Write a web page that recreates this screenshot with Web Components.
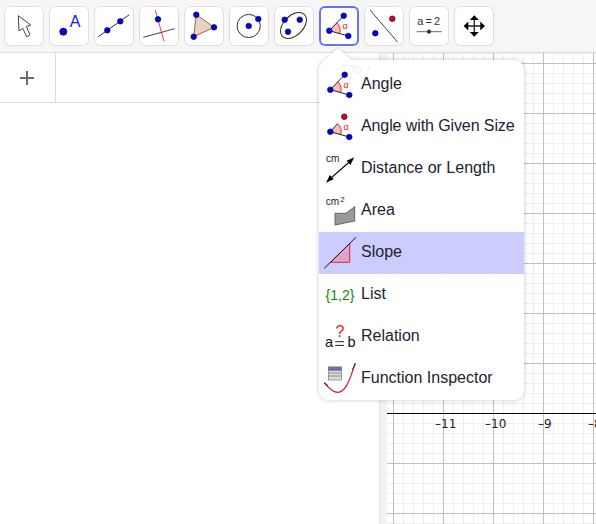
<!DOCTYPE html>
<html>
<head>
<meta charset="utf-8">
<title>Tools</title>
<style>
    html, body { margin: 0; height: 100%; background: #fff; overflow: hidden; }
    body { font-family: "Liberation Sans", Arial, sans-serif; }
</style>
</head>
<body>
<ggb-app>
    <ggb-toolbar slot="toolbar">
        <ggb-tool icon="move"></ggb-tool>
        <ggb-tool icon="point"></ggb-tool>
        <ggb-tool icon="line"></ggb-tool>
        <ggb-tool icon="perp"></ggb-tool>
        <ggb-tool icon="polygon"></ggb-tool>
        <ggb-tool icon="circle"></ggb-tool>
        <ggb-tool icon="conic"></ggb-tool>
        <ggb-tool icon="angle" selected></ggb-tool>
        <ggb-tool icon="reflect"></ggb-tool>
        <ggb-tool icon="slider"></ggb-tool>
        <ggb-tool icon="pan"></ggb-tool>
    </ggb-toolbar>
    <ggb-algebra slot="left"></ggb-algebra>
    <ggb-graphics slot="right"></ggb-graphics>
    <ggb-menu slot="popup">
        <ggb-menu-item icon="angle">Angle</ggb-menu-item>
        <ggb-menu-item icon="anglesize" style="letter-spacing: -.1px">Angle with Given Size</ggb-menu-item>
        <ggb-menu-item icon="distance">Distance or Length</ggb-menu-item>
        <ggb-menu-item icon="area">Area</ggb-menu-item>
        <ggb-menu-item icon="slope" active>Slope</ggb-menu-item>
        <ggb-menu-item icon="list">List</ggb-menu-item>
        <ggb-menu-item icon="relation">Relation</ggb-menu-item>
        <ggb-menu-item icon="inspector">Function Inspector</ggb-menu-item>
    </ggb-menu>
</ggb-app>

<script>
const pt = (x, y, fill = '#0000e0', r = 2.8) =>
    `<circle cx="${x}" cy="${y}" r="${r}" fill="${fill}" stroke="#101040" stroke-width=".7"/>`

const wedge = `<path d="M10.3 24.7L17.6 16.7A10.8 10.8 0 0 1 20.7 27.7Z" fill="#ffbcbc" stroke="none"/>
    <path d="M17.6 16.7A10.8 10.8 0 0 1 20.7 27.7" fill="none" stroke="#e83030" stroke-width="1"/>
    <text x="26" y="23.4" text-anchor="middle" font-size="9" fill="#e81818">α</text>`

const ICONS = {
    move: `<path d="M14.3 9.7L15 25L18.7 22.3L22.7 30.7L26 28.8L22.3 20.4L26.7 19Z" fill="#fff" stroke="#444" stroke-width="1" stroke-linejoin="round"/>`,
    point: `<circle cx="14.3" cy="25.7" r="3.6" fill="#0000e0" stroke="#111" stroke-width=".6"/>
        <text x="26" y="20.6" text-anchor="middle" font-size="16" fill="#1414ff">A</text>`,
    line: `<path d="M4.3 30.7L35.3 8.7" stroke="#333" stroke-width="1"/>${pt(13.3, 24.3)}${pt(26.3, 15.3)}`,
    perp: `<path d="M16.3 4L25 35.3" stroke="#f04040" stroke-width="1"/>
        <path d="M4.3 31.3L35.7 22.7" stroke="#444" stroke-width="1"/>${pt(19, 13.3)}`,
    polygon: `<path d="M12.3 8.7L30 21.3L9.7 30.7Z" fill="#e8d2c6" stroke="#a8623c" stroke-width="1"/>
        ${pt(12.3, 8.7)}${pt(30, 21.3)}${pt(9.7, 30.7)}`,
    circle: `<circle cx="19.7" cy="20" r="11.6" fill="none" stroke="#333" stroke-width="1"/>
        ${pt(19.7, 20)}${pt(29.3, 13)}`,
    conic: `<ellipse cx="19.5" cy="19.5" rx="15.5" ry="9.8" transform="rotate(-45 19.5 19.5)" fill="none" stroke="#333" stroke-width="1"/>
        ${pt(10.7, 13.7)}${pt(25.7, 13.7)}${pt(14, 25.7)}`,
    angle: `${wedge}<path d="M24.7 9.7L10.3 24.7L29.3 30" stroke="#222" stroke-width="1" fill="none"/>
        ${pt(24.7, 9.7)}${pt(10.3, 24.7)}${pt(29.3, 30)}`,
    anglesize: `${wedge}<path d="M17.6 16.7L10.3 24.7L29.3 30" stroke="#222" stroke-width="1" fill="none"/>
        ${pt(24.3, 9.7, '#e00010')}${pt(10.3, 24.7)}${pt(29.3, 30)}`,
    reflect: `<path d="M6 4L33.7 36.3" stroke="#444" stroke-width="1"/>${pt(11.3, 27.3)}${pt(28.3, 12.7, '#e00010')}`,
    slider: `<text x="19.7" y="19" text-anchor="middle" font-size="11" word-spacing="-1" fill="#333">a = 2</text>
        <path d="M7.7 25.7H32.7" stroke="#666" stroke-width="1"/>
        <circle cx="20" cy="25.7" r="2.1" fill="#333"/>`,
    pan: `<path d="M20.3 12V28M12 20H28.6" stroke="#222" stroke-width="1.3"/>
        <path d="M20.3 9.3L24.8 14H15.8ZM20.3 30.7L24.8 26H15.8ZM9.6 20L14.3 15.5V24.5ZM31 20L26.3 15.5V24.5Z" fill="#000"/>`,
    distance: `<text x="6" y="13.3" font-size="10" fill="#222">cm</text>
        <path d="M9 30.7L31.3 11.3" stroke="#111" stroke-width="1.2"/>
        <path d="M34.3 8.3L30.4 16L26.7 11.8ZM6 33.7L9.9 26L13.6 30.2Z" fill="#000"/>`,
    area: `<text x="5.7" y="14" font-size="10" fill="#222">cm</text><text x="20.2" y="11.3" font-size="8" fill="#222">2</text>
        <path d="M15 22.3H26L34.7 15.7V30L15 34Z" fill="#999" stroke="#666" stroke-width="1"/>`,
    slope: `<path d="M10.7 29.3L29.7 10.3V29.3Z" fill="#ff5050" fill-opacity=".3" stroke="#e82030" stroke-width="1"/>
        <path d="M4.3 35.3L36 4.3" stroke="#111" stroke-width="1"/>`,
    list: `<text x="20" y="25" text-anchor="middle" font-size="14" fill="#0a8a0a">{1,2}</text>`,
    relation: `<text x="20" y="19.7" text-anchor="middle" font-size="16" fill="#f01818">?</text>
        <text x="5" y="30.3" font-size="14.5" fill="#111">a</text><text x="27.6" y="30.3" font-size="14.5" fill="#111">b</text>
        <path d="M15.2 24.7H24M15.2 28.4H24" stroke="#222" stroke-width="1"/>`,
    inspector: `<path d="M4.3 23.7C8 28 12 33.3 17.7 33.3C27 33.3 31 16 35.3 4.3" fill="none" stroke="#d81820" stroke-width="1.2"/>
        <path d="M4.3 23.7L8 27M32.5 11L35.3 4.3" fill="none" stroke="#444" stroke-width="1.2"/>
        <rect x="8.5" y="8" width="13" height="13" fill="#ddd" stroke="#888" stroke-width=".8"/>
        <rect x="8.5" y="8" width="13" height="3.5" fill="#6a6ac8" stroke="#777" stroke-width=".6"/>
        <path d="M8.5 14H21.5M8.5 17H21.5" stroke="#888" stroke-width="1"/>`
}

const iconSvg = name => `<svg viewBox="0 0 40 40" width="40" height="40" font-family="Liberation Sans, Arial, sans-serif">${ICONS[name] || ''}</svg>`

class GgbApp extends HTMLElement {
    constructor() {
        super()
        this.attachShadow({ mode: 'open' })
        this.shadowRoot.innerHTML = `
            <style>
                :host {
                    display: grid;
                    position: relative;
                    grid-template-rows: 53px 1fr;
                    width: 100%;
                    height: 100vh;
                    overflow: hidden;
                }
                .main {
                    display: grid;
                    grid-template-columns: 379px 8px 1fr;
                    min-height: 0;
                }
                .split {
                    background: #f3f3f3;
                    border-left: 1px solid #e4e4e4;
                }
                .pop { position: absolute; left: 319px; top: 60px; }
            </style>
            <slot name="toolbar"></slot>
            <div class="main">
                <slot name="left"></slot>
                <div class="split"></div>
                <slot name="right"></slot>
            </div>
            <div class="pop"><slot name="popup"></slot></div>
        `
    }
}

class GgbToolbar extends HTMLElement {
    constructor() {
        super()
        this.attachShadow({ mode: 'open' })
        this.shadowRoot.innerHTML = `
            <style>
                :host {
                    display: flex;
                    gap: 5px;
                    box-sizing: border-box;
                    height: 53px;
                    padding: 6px 4px 0 4px;
                    background: #f6f6f6;
                    border-bottom: 1px solid #dedede;
                }
            </style>
            <slot></slot>
        `
    }
}

class GgbTool extends HTMLElement {
    constructor() {
        super()
        this.attachShadow({ mode: 'open' })
    }

    connectedCallback() {
        this.shadowRoot.innerHTML = `
            <style>
                :host {
                    display: block;
                    box-sizing: border-box;
                    width: 40px;
                    height: 40px;
                    background: #fff;
                    border-radius: 6px;
                    box-shadow: inset 0 0 0 1px #dfdfdf;
                }
                :host([selected]) { box-shadow: inset 0 0 0 2px #6674f4; }
                svg { display: block; }
            </style>
            ${iconSvg(this.getAttribute('icon'))}
        `
    }
}

class GgbAlgebra extends HTMLElement {
    constructor() {
        super()
        this.attachShadow({ mode: 'open' })
        this.shadowRoot.innerHTML = `
            <style>
                :host { display: block; background: #fff; }
                .head {
                    display: flex;
                    box-sizing: border-box;
                    height: 50px;
                    border-bottom: 1px solid #dcdcdc;
                }
                .add {
                    display: flex;
                    align-items: center;
                    justify-content: center;
                    box-sizing: border-box;
                    width: 56px;
                    padding-right: 2px;
                    border-right: 1px solid #dcdcdc;
                }
                svg { display: block; }
            </style>
            <div class="head">
                <div class="add">
                    <svg width="16" height="16" viewBox="0 0 16 16"><path d="M1 8H15M8 1V15" stroke="#6e6e6e" stroke-width="2"/></svg>
                </div>
            </div>
        `
    }
}

class GgbGraphics extends HTMLElement {
    constructor() {
        super()
        this.attachShadow({ mode: 'open' })
        // page x of each label start, the graphics view begins at 387
        const labels = [['11', 435], ['10', 485], ['9', 538], ['8', 588]]
            .map(([n, x]) => `<span class="tick" style="left:${x - 387}px">\u2013${n}</span>`)
            .join('')
        this.shadowRoot.innerHTML = `
            <style>
                :host {
                    display: block;
                    position: relative;
                    overflow: hidden;
                    background-color: #fff;
                    background-image:
                        linear-gradient(to right, #c0c0c0 1px, transparent 1px),
                        linear-gradient(to bottom, #c0c0c0 1px, transparent 1px),
                        linear-gradient(to right, #eeeeee 1px, transparent 1px),
                        linear-gradient(to bottom, #eeeeee 1px, transparent 1px);
                    background-size: 50px 50px, 50px 50px, 10px 10px, 10px 10px;
                    background-position: 6px 10px, 6px 10px, 6px 0, 0 0;
                    font-family: "DejaVu Sans", sans-serif;
                }
                .axis {
                    position: absolute;
                    left: 0;
                    right: 0;
                    top: 360px;
                    height: 1px;
                    background: #000;
                }
                .tick {
                    position: absolute;
                    top: 363px;
                    font-size: 12px;
                    line-height: 16px;
                    color: #1c1c1c;
                    white-space: nowrap;
                }
            </style>
            <div class="axis"></div>
            ${labels}
        `
    }
}

class GgbMenu extends HTMLElement {
    constructor() {
        super()
        this.attachShadow({ mode: 'open' })
        this.shadowRoot.innerHTML = `
            <style>
                :host {
                    display: block;
                    position: relative;
                    box-sizing: border-box;
                    width: 205px;
                    height: 340px;
                    padding-top: 4px;
                    background: rgba(255, 255, 255, .96);
                    border-radius: 10px;
                    box-shadow: 0 0 5px rgba(0, 0, 0, .22);
                }
                .notch-wrap {
                    position: absolute;
                    left: 4px;
                    top: -12px;
                    filter: drop-shadow(0 -1px 1px rgba(0, 0, 0, .12));
                }
                .notch {
                    width: 30px;
                    height: 13px;
                    clip-path: polygon(50% 0, 100% 100%, 0 100%);
                    background: #fff;
                }
                .ghost { position: absolute; left: 22px; top: 5px; }
                .items { position: relative; overflow: hidden; border-radius: 0 0 10px 10px; }
            </style>
            <div class="notch-wrap"><div class="notch"></div></div>
            <svg class="ghost" width="32" height="16" viewBox="0 0 32 16" fill="none" stroke="#f3f3f6" stroke-width="1.5">
                <path d="M0 1H14M13 1L9 15M29 1L22 15"/>
                <circle cx="17" cy="5" r="3"/>
            </svg>
            <div class="items"><slot></slot></div>
        `
    }
}

class GgbMenuItem extends HTMLElement {
    constructor() {
        super()
        this.attachShadow({ mode: 'open' })
    }

    connectedCallback() {
        this.shadowRoot.innerHTML = `
            <style>
                :host {
                    display: flex;
                    align-items: center;
                    gap: 1px;
                    box-sizing: border-box;
                    height: 42px;
                    padding-left: 1px;
                    font-size: 16px;
                    color: #1c2430;
                    white-space: nowrap;
                }
                :host([active]) { background: #ccccff; }
                svg { display: block; flex: none; }
                span { position: relative; top: -1px; }
            </style>
            ${iconSvg(this.getAttribute('icon'))}
            <span><slot></slot></span>
        `
    }
}

customElements.define('ggb-app', GgbApp)
customElements.define('ggb-toolbar', GgbToolbar)
customElements.define('ggb-tool', GgbTool)
customElements.define('ggb-algebra', GgbAlgebra)
customElements.define('ggb-graphics', GgbGraphics)
customElements.define('ggb-menu', GgbMenu)
customElements.define('ggb-menu-item', GgbMenuItem)
</script>
</body>
</html>
